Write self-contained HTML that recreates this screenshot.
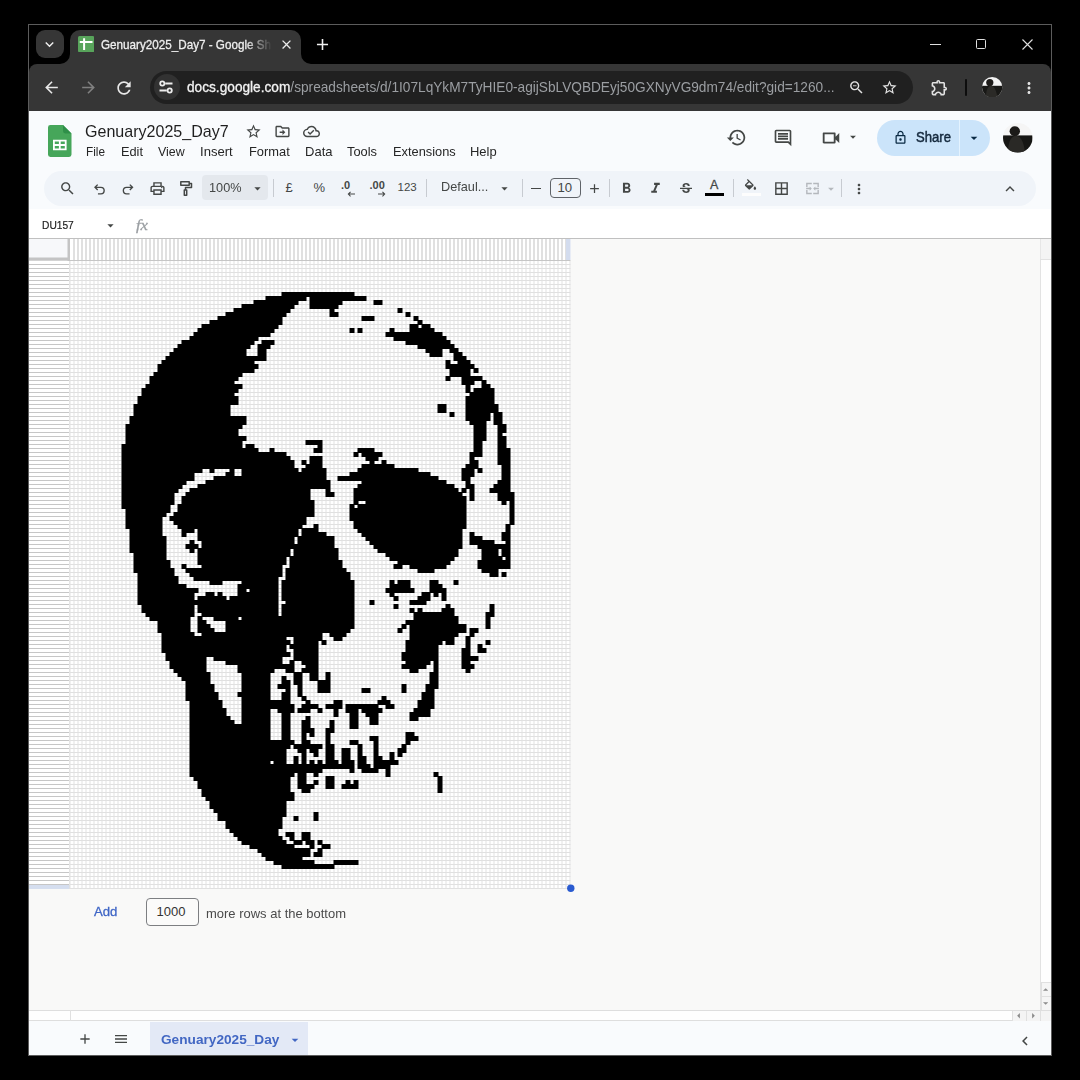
<!DOCTYPE html>
<html><head><meta charset="utf-8"><title>Genuary2025_Day7 - Google Sheets</title>
<style>
html,body{margin:0;padding:0;background:#000;}
body{width:1080px;height:1080px;position:relative;overflow:hidden;font-family:"Liberation Sans",sans-serif;}
.a{position:absolute;box-sizing:border-box}
.t{position:absolute;white-space:nowrap;font-family:"Liberation Sans",sans-serif}
.ic{position:absolute;display:block}
</style></head><body>

<div class="a" style="left:28px;top:24px;width:1024px;height:1032px;background:#000;border:1px solid #5c5c5c"></div>
<div class="a" style="left:35.5px;top:30px;width:28px;height:28px;border-radius:9px;background:#363636"></div>
<svg class="ic" style="left:41.1px;top:35.5px;width:17px;height:17px" viewBox="0 0 24 24"><path fill="#f0f0f0" d="M16.59 8.59L12 13.17 7.41 8.59 6 10l6 6 6-6z"/></svg>
<div class="a" style="left:70px;top:30px;width:231px;height:36px;border-radius:10px 10px 0 0;background:#363636"></div>
<svg class="ic" style="left:60px;top:54px;width:10px;height:10px" viewBox="0 0 10 10"><path fill="#363636" d="M10 0v10H0A10 10 0 0 0 10 0z"/></svg>
<svg class="ic" style="left:301px;top:54px;width:10px;height:10px" viewBox="0 0 10 10"><path fill="#363636" d="M0 0v10h10A10 10 0 0 1 0 0z"/></svg>
<svg class="ic" style="left:77.5px;top:35.8px;width:16.3px;height:16.3px" viewBox="0 0 16.3 16.3"><rect width="16.3" height="16.3" rx="1.6" fill="#58a45b"/><path d="M6.1 2.3v11.800M1.800 6.100h12.700" stroke="#fff" stroke-width="2" fill="none"/></svg>
<div class="t" style="left:101px;top:36.86px;font-size:12.9px;line-height:15.48px;color:#efefef;transform:scaleX(0.9054);transform-origin:0 50%;-webkit-text-stroke:0.3px #efefef;width:190px;overflow:hidden;-webkit-mask-image:linear-gradient(90deg,#000 160px,transparent 189px);mask-image:linear-gradient(90deg,#000 160px,transparent 189px)">Genuary2025_Day7 - Google Sh</div>
<svg class="ic" style="left:278.5px;top:37px;width:15px;height:15px" viewBox="0 0 24 24"><path fill="#ececec" d="M19 6.41L17.59 5 12 10.59 6.41 5 5 6.41 10.59 12 5 17.59 6.41 19 12 13.41 17.59 19 19 17.59 13.41 12z"/></svg>
<svg class="ic" style="left:312.5px;top:35px;width:19px;height:19px" viewBox="0 0 24 24"><path fill="#f0f0f0" d="M19 13h-6v6h-2v-6H5v-2h6V5h2v6h6v2z"/></svg>
<div class="a" style="left:930px;top:44px;width:11px;height:1px;background:#e0e0e0"></div>
<div class="a" style="left:976px;top:39px;width:10px;height:10px;border:1.2px solid #e0e0e0;border-radius:1.5px"></div>
<svg class="ic" style="left:1022px;top:39px;width:11px;height:11px" viewBox="0 0 11 11"><path d="M0.5 0.5l10 10M10.5 0.5l-10 10" stroke="#e0e0e0" stroke-width="1.1"/></svg>
<div class="a" style="left:29px;top:64px;width:1022px;height:47px;background:#363636;border-radius:8px 8px 0 0"></div>
<svg class="ic" style="left:42px;top:78px;width:19px;height:19px" viewBox="0 0 24 24"><path fill="#e8e8e8" d="M20 11H7.83l5.59-5.59L12 4l-8 8 8 8 1.41-1.41L7.83 13H20v-2z"/></svg>
<svg class="ic" style="left:78.5px;top:78px;width:19px;height:19px" viewBox="0 0 24 24"><path fill="#808080" d="M12 4l-1.41 1.41L16.17 11H4v2h12.17l-5.58 5.59L12 20l8-8z"/></svg>
<svg class="ic" style="left:114px;top:77.5px;width:20px;height:20px" viewBox="0 0 24 24"><path fill="#e8e8e8" d="M17.65 6.35C16.2 4.9 14.21 4 12 4c-4.42 0-7.99 3.58-7.99 8s3.57 8 7.99 8c3.73 0 6.84-2.55 7.73-6h-2.08c-.82 2.33-3.04 4-5.65 4-3.31 0-6-2.69-6-6s2.69-6 6-6c1.66 0 3.14.69 4.22 1.78L13 11h7V4l-2.35 2.35z"/></svg>
<div class="a" style="left:150px;top:70.5px;width:763px;height:33.5px;border-radius:17px;background:#202020"></div>
<div class="a" style="left:153.5px;top:74px;width:26px;height:26px;border-radius:13px;background:#323232"></div>
<svg class="ic" style="left:158px;top:79px;width:16px;height:16px" viewBox="0 0 16 16"><g stroke="#ececec" stroke-width="1.800" fill="none"><path d="M7.2 4.5h7.3M1.5 11.5h7.3"/><circle cx="4.3" cy="4.5" r="2.1"/><circle cx="11.7" cy="11.5" r="2.1"/></g></svg>
<div class="t" style="left:186.5px;top:78.98px;font-size:14.2px;line-height:17.04px;color:#9b9ea2;transform:scaleX(0.9635);transform-origin:0 50%;"><span style="color:#f2f2f2;-webkit-text-stroke:0.3px #f2f2f2">docs.google.com</span>/spreadsheets/d/1I07LqYkM7TyHIE0-agijSbLVQBDEyj50GXNyVG9dm74/edit?gid=1260...</div>
<svg class="ic" style="left:847.5px;top:79px;width:17px;height:17px" viewBox="0 0 24 24"><path fill="#e3e3e3" d="M15.5 14h-.79l-.28-.27C15.41 12.59 16 11.11 16 9.5 16 5.91 13.09 3 9.5 3S3 5.91 3 9.5 5.91 16 9.5 16c1.61 0 3.09-.59 4.23-1.57l.27.28v.79l5 4.99L20.49 19l-4.99-5zm-6 0C7.01 14 5 11.99 5 9.5S7.01 5 9.5 5 14 7.01 14 9.5 11.99 14 9.5 14z"/><path d="M7 9h5v1.2H7z" fill="#e3e3e3"/></svg>
<svg class="ic" style="left:880.5px;top:78.5px;width:17px;height:17px" viewBox="0 0 24 24"><path fill="#e3e3e3" d="M22 9.24l-7.19-.62L12 2 9.19 8.63 2 9.24l5.46 4.73L5.82 21 12 17.27 18.18 21l-1.63-7.03L22 9.24zM12 15.4l-3.76 2.27 1-4.28-3.32-2.88 4.38-.38L12 6.1l1.71 4.04 4.38.38-3.32 2.88 1 4.28L12 15.4z"/></svg>
<svg class="ic" style="left:930px;top:78px;width:19px;height:19px" viewBox="0 0 24 24"><path fill="#e3e3e3" d="M10.5 4.5c.28 0 .5.22.5.5v2h6v6h2c.28 0 .5.22.5.5s-.22.5-.5.5h-2v6h-2.12c-.68-1.75-2.39-3-4.38-3s-3.7 1.25-4.38 3H4v-2.12c1.75-.68 3-2.39 3-4.38 0-1.99-1.24-3.7-2.99-4.38L4 7h6V5c0-.28.22-.5.5-.5m0-2C9.12 2.5 8 3.62 8 5H4c-1.1 0-1.99.9-1.99 2v3.8h.29c1.49 0 2.7 1.21 2.7 2.7s-1.21 2.7-2.7 2.7H2V20c0 1.1.9 2 2 2h3.8v-.3c0-1.49 1.21-2.7 2.7-2.7s2.7 1.21 2.7 2.7v.3H17c1.1 0 2-.9 2-2v-4c1.38 0 2.5-1.12 2.5-2.5S20.38 11 19 11V7c0-1.1-.9-2-2-2h-4c0-1.38-1.12-2.5-2.5-2.5z"/></svg>
<div class="a" style="left:964.5px;top:79px;width:2px;height:17px;background:#0d0d0d;border-radius:1px"></div>
<svg class="ic" style="left:982.2px;top:76.7px;width:20.4px;height:20.4px" viewBox="0 0 20.4 20.4"><defs><clipPath id="c1"><circle cx="10.2" cy="10.2" r="10.2"/></clipPath></defs><g clip-path="url(#c1)"><rect width="20.4" height="20.4" fill="#f3f3f3"/><rect y="8.8" width="20.4" height="12" fill="#181816"/><ellipse cx="7.8" cy="5.6" rx="3.6" ry="3.6" fill="#1d1b19"/><path d="M4 20.4c0-7 1.500-10.500 4-11.500s6 1.500 7.500 11.500z" fill="#2b2a27"/></g></svg>
<svg class="ic" style="left:1020px;top:78.5px;width:18px;height:18px" viewBox="0 0 24 24"><path fill="#e3e3e3" d="M12 8c1.1 0 2-.9 2-2s-.9-2-2-2-2 .9-2 2 .9 2 2 2zm0 2c-1.1 0-2 .9-2 2s.9 2 2 2 2-.9 2-2-.9-2-2-2zm0 6c-1.1 0-2 .9-2 2s.9 2 2 2 2-.9 2-2-.9-2-2-2z"/></svg>
<div class="a" style="left:29px;top:111px;width:1022px;height:943px;background:#f9fbfd"></div>
<svg class="ic" style="left:48px;top:124.5px;width:23.5px;height:32px" viewBox="0 0 23.5 32"><path d="M2.4 0h12.6l8.5 8.5v21.1a2.4 2.4 0 0 1-2.4 2.4H2.4A2.4 2.4 0 0 1 0 29.600V2.4A2.400 2.400 0 0 1 2.4 0z" fill="#46a65a"/><path d="M15 0l8.500 8.500H17.400A2.400 2.400 0 0 1 15 6.100z" fill="#2f8f49"/><path d="M5 14.800h13.600v10.500H5zM6.800 16.600v2.500h4.100v-2.500zm5.900 0v2.500h4.100v-2.500zM6.800 20.900v2.600h4.100v-2.600zm5.900 0v2.600h4.100v-2.600z" fill="#fff" fill-rule="evenodd"/></svg>
<div class="t" style="left:84.6px;top:122.18px;font-size:16.2px;line-height:19.44px;color:#1f1f1f;transform:scaleX(0.9918);transform-origin:0 50%;">Genuary2025_Day7</div>
<svg class="ic" style="left:245px;top:122.5px;width:17px;height:17px" viewBox="0 0 24 24"><path fill="#444746" d="M22 9.24l-7.19-.62L12 2 9.19 8.63 2 9.24l5.46 4.73L5.82 21 12 17.27 18.18 21l-1.63-7.03L22 9.24zM12 15.4l-3.76 2.27 1-4.28-3.32-2.88 4.38-.38L12 6.1l1.71 4.04 4.38.38-3.32 2.88 1 4.28L12 15.4z"/></svg>
<svg class="ic" style="left:274px;top:122.5px;width:17px;height:17px" viewBox="0 0 24 24"><path fill="#444746" d="M20 6h-8l-2-2H4c-1.1 0-2 .9-2 2v12c0 1.1.9 2 2 2h16c1.1 0 2-.9 2-2V8c0-1.1-.9-2-2-2zm0 12H4V6h5.17l2 2H20v10zm-8-1l4-4-4-4v3H8v2h4v3z"/></svg>
<svg class="ic" style="left:302.5px;top:122.5px;width:17px;height:17px" viewBox="0 0 24 24"><path fill="#444746" d="M19.35 10.04C18.67 6.59 15.64 4 12 4 9.11 4 6.6 5.64 5.35 8.04 2.34 8.36 0 10.91 0 14c0 3.31 2.69 6 6 6h13c2.76 0 5-2.24 5-5 0-2.64-2.05-4.78-4.65-4.96zM19 18H6c-2.21 0-4-1.79-4-4s1.79-4 4-4h.71C7.37 7.69 9.48 6 12 6c3.04 0 5.5 2.46 5.5 5.5v.5H19c1.66 0 3 1.34 3 3s-1.34 3-3 3zm-9-3.82l-2.09-2.09L6.5 13.5 10 17l6.01-6.01-1.41-1.41z"/></svg>
<div class="t" style="left:86px;top:144.16px;font-size:12.9px;line-height:15.48px;color:#262626;transform:scaleX(0.9143);transform-origin:0 50%;">File</div>
<div class="t" style="left:120.7px;top:144.16px;font-size:12.9px;line-height:15.48px;color:#262626;transform:scaleX(0.9902);transform-origin:0 50%;">Edit</div>
<div class="t" style="left:158px;top:144.16px;font-size:12.9px;line-height:15.48px;color:#262626;transform:scaleX(0.9596);transform-origin:0 50%;">View</div>
<div class="t" style="left:200.2px;top:144.16px;font-size:12.9px;line-height:15.48px;color:#262626;transform:scaleX(1.0140);transform-origin:0 50%;">Insert</div>
<div class="t" style="left:248.8px;top:144.16px;font-size:12.9px;line-height:15.48px;color:#262626;transform:scaleX(0.9969);transform-origin:0 50%;">Format</div>
<div class="t" style="left:304.8px;top:144.16px;font-size:12.9px;line-height:15.48px;color:#262626;transform:scaleX(1.0098);transform-origin:0 50%;">Data</div>
<div class="t" style="left:347.4px;top:144.16px;font-size:12.9px;line-height:15.48px;color:#262626;transform:scaleX(0.9969);transform-origin:0 50%;">Tools</div>
<div class="t" style="left:392.7px;top:144.16px;font-size:12.9px;line-height:15.48px;color:#262626;transform:scaleX(0.9943);transform-origin:0 50%;">Extensions</div>
<div class="t" style="left:470px;top:144.16px;font-size:12.9px;line-height:15.48px;color:#262626;transform:scaleX(1.0070);transform-origin:0 50%;">Help</div>
<svg class="ic" style="left:726px;top:127px;width:21px;height:21px" viewBox="0 0 24 24"><path fill="#444746" d="M13 3c-4.97 0-9 4.03-9 9H1l3.89 3.89.07.14L9 12H6c0-3.87 3.13-7 7-7s7 3.13 7 7-3.13 7-7 7c-1.93 0-3.68-.79-4.94-2.06l-1.42 1.42C8.27 19.99 10.51 21 13 21c4.97 0 9-4.03 9-9s-4.03-9-9-9zm-1 5v5l4.28 2.54.72-1.21-3.5-2.08V8H12z"/></svg>
<svg class="ic" style="left:772.5px;top:128px;width:20px;height:20px" viewBox="0 0 24 24"><path fill="#444746" d="M21.99 4c0-1.1-.89-2-1.99-2H4c-1.1 0-2 .9-2 2v12c0 1.1.9 2 2 2h14l4 4-.01-18zM20 4v13.17L18.83 16H4V4h16zM6 12h12v2H6zm0-3h12v2H6zm0-3h12v2H6z"/></svg>
<svg class="ic" style="left:820px;top:126.5px;width:22px;height:22px" viewBox="0 0 24 24"><path fill="#444746" d="M15 8v8H5V8h10m1-2H4c-.55 0-1 .45-1 1v10c0 .55.45 1 1 1h12c.55 0 1-.45 1-1v-3.5l4 4v-11l-4 4V7c0-.55-.45-1-1-1z"/></svg>
<svg class="ic" style="left:846px;top:130px;width:14px;height:14px" viewBox="0 0 24 24"><path fill="#444746" d="M7 10l5 5 5-5z"/></svg>
<div class="a" style="left:877px;top:119.500px;width:112.500px;height:36.500px;border-radius:18.250px;background:#cbe4fa"></div>
<div class="a" style="left:958.5px;top:119.500px;width:1px;height:36.500px;background:#e4f3ff"></div>
<svg class="ic" style="left:892.5px;top:130px;width:15px;height:15px" viewBox="0 0 24 24"><path fill="#0a2a44" d="M18 8h-1V6c0-2.76-2.24-5-5-5S7 3.24 7 6v2H6c-1.1 0-2 .9-2 2v10c0 1.1.9 2 2 2h12c1.1 0 2-.9 2-2V10c0-1.1-.9-2-2-2zM9 6c0-1.66 1.34-3 3-3s3 1.34 3 3v2H9V6zm9 14H6V10h12v10zm-6-3c1.1 0 2-.9 2-2s-.9-2-2-2-2 .9-2 2 .9 2 2 2z"/></svg>
<div class="t" style="left:916px;top:129.72px;font-size:13.8px;line-height:16.56px;color:#14283c;transform:scaleX(0.9504);transform-origin:0 50%;-webkit-text-stroke:0.45px #14283c;">Share</div>
<svg class="ic" style="left:966px;top:130px;width:16px;height:16px" viewBox="0 0 24 24"><path fill="#0a2a44" d="M7 10l5 5 5-5z"/></svg>
<svg class="ic" style="left:1003.3px;top:123.3px;width:29.6px;height:29.6px" viewBox="0 0 29.6 29.6"><defs><clipPath id="c2"><circle cx="14.8" cy="14.8" r="14.8"/></clipPath></defs><g clip-path="url(#c2)"><rect width="29.6" height="29.6" fill="#f5f5f5"/><rect y="12.400" width="29.6" height="18" fill="#161614"/><ellipse cx="11.8" cy="8.200" rx="5.200" ry="5" fill="#1b1a18"/><path d="M5 29.6c0-10 2.500-15 6.500-16.500s9 2.500 10.500 16.500z" fill="#2a2926"/></g></svg>
<div class="a" style="left:44px;top:170.5px;width:992px;height:35.3px;border-radius:17.600px;background:#f0f4f9"></div>
<svg class="ic" style="left:59px;top:179.5px;width:17px;height:17px" viewBox="0 0 24 24"><path fill="#444746" d="M15.5 14h-.79l-.28-.27C15.41 12.59 16 11.11 16 9.5 16 5.91 13.09 3 9.5 3S3 5.91 3 9.5 5.91 16 9.5 16c1.61 0 3.09-.59 4.23-1.57l.27.28v.79l5 4.99L20.49 19l-4.99-5zm-6 0C7.01 14 5 11.99 5 9.5S7.01 5 9.5 5 14 7.01 14 9.5 11.99 14 9.5 14z"/></svg>
<svg class="ic" style="left:92.5px;top:182.5px;width:13.5px;height:13.5px" viewBox="0 0 15 15"><path d="M5.2 1.800L2.200 4.800l3 3M2.500 4.800h6.300a3.600 3.600 0 0 1 0 7.200H5.500" stroke="#444746" stroke-width="1.500" fill="none"/></svg>
<svg class="ic" style="left:120.5px;top:182.5px;width:13.5px;height:13.5px" viewBox="0 0 15 15"><path d="M9.800 1.800l3 3-3 3M12.500 4.800H6.200a3.600 3.600 0 0 0 0 7.200h3.300" stroke="#444746" stroke-width="1.500" fill="none"/></svg>
<svg class="ic" style="left:148.5px;top:179.5px;width:17px;height:17px" viewBox="0 0 24 24"><path fill="#444746" d="M19 8h-1V3H6v5H5c-1.66 0-3 1.34-3 3v6h4v4h12v-4h4v-6c0-1.66-1.34-3-3-3zM8 5h8v3H8V5zm8 12v2H8v-4h8v2zm2-2v-2H6v2H4v-4c0-.55.45-1 1-1h14c.55 0 1 .45 1 1v4h-2zM18 11.5a1 1 0 1 1 0-2 1 1 0 0 1 0 2z"/></svg>
<svg class="ic" style="left:177.5px;top:180px;width:16px;height:17px" viewBox="0 0 16 17"><path d="M2.800 1.800h8.400v3.400H2.800zM11.200 3.500h2.300v4H7.500v2.500M6.300 10h2.400v5.200H6.300z" stroke="#444746" stroke-width="1.500" fill="none" stroke-linejoin="round"/></svg>
<div class="a" style="left:202px;top:175px;width:66px;height:25px;border-radius:4px;background:#e4e8ed"></div>
<div class="t" style="left:209px;top:180.08px;font-size:13.2px;line-height:15.84px;color:#444746;transform:scaleX(0.9634);transform-origin:0 50%;">100%</div>
<svg class="ic" style="left:249.5px;top:181px;width:15px;height:15px" viewBox="0 0 24 24"><path fill="#444746" d="M7 10l5 5 5-5z"/></svg>
<div class="a" style="left:273px;top:179px;width:1px;height:18px;background:#c7cbd1"></div>
<div class="t" style="left:285.5px;top:179.7px;font-size:13px;line-height:15.6px;color:#444746;">£</div>
<div class="t" style="left:313.5px;top:180.2px;font-size:13px;line-height:15.6px;color:#444746;">%</div>
<div class="t" style="left:341px;top:178.9px;font-size:11px;line-height:13.2px;color:#444746;font-weight:bold">.0</div>
<svg class="ic" style="left:346.5px;top:190.5px;width:8px;height:6.200px" viewBox="0 0 9 7"><path d="M9 3.500H1.500M4 1L1.500 3.500 4 6" stroke="#444746" stroke-width="1.200" fill="none"/></svg>
<div class="t" style="left:369.5px;top:178.9px;font-size:11px;line-height:13.2px;color:#444746;font-weight:bold">.00</div>
<svg class="ic" style="left:377.5px;top:190.5px;width:8px;height:6.200px" viewBox="0 0 9 7"><path d="M0 3.500h7.500M5 1l2.500 2.500L5 6" stroke="#444746" stroke-width="1.200" fill="none"/></svg>
<div class="t" style="left:397.5px;top:181.1px;font-size:11.5px;line-height:13.8px;color:#444746;">123</div>
<div class="a" style="left:425.5px;top:179px;width:1px;height:18px;background:#c7cbd1"></div>
<div class="t" style="left:440.7px;top:179.34px;font-size:13.6px;line-height:16.32px;color:#444746;transform:scaleX(0.9343);transform-origin:0 50%;">Defaul...</div>
<svg class="ic" style="left:496.5px;top:181px;width:15px;height:15px" viewBox="0 0 24 24"><path fill="#444746" d="M7 10l5 5 5-5z"/></svg>
<div class="a" style="left:522px;top:179px;width:1px;height:18px;background:#c7cbd1"></div>
<div class="a" style="left:530.5px;top:187.500px;width:10.500px;height:1.500px;background:#444746"></div>
<div class="a" style="left:549.500px;top:177.500px;width:31.500px;height:20.500px;border:1px solid #5f6368;border-radius:4px"></div>
<div class="t" style="left:557.5px;top:180.08px;font-size:13.2px;line-height:15.84px;color:#444746;">10</div>
<svg class="ic" style="left:586.5px;top:180.5px;width:15px;height:15px" viewBox="0 0 24 24"><path fill="#444746" d="M19 13h-6v6h-2v-6H5v-2h6V5h2v6h6v2z"/></svg>
<div class="a" style="left:609px;top:179px;width:1px;height:18px;background:#c7cbd1"></div>
<svg class="ic" style="left:617.5px;top:180px;width:17px;height:17px" viewBox="0 0 24 24"><path fill="#444746" d="M15.6 10.79c.97-.67 1.65-1.77 1.65-2.79 0-2.26-1.75-4-4-4H7v14h7.04c2.09 0 3.71-1.7 3.71-3.79 0-1.52-.86-2.82-2.15-3.42zM10 6.5h3c.83 0 1.5.67 1.5 1.5s-.67 1.5-1.5 1.5h-3v-3zm3.5 9H10v-3h3.5c.83 0 1.5.67 1.5 1.5s-.67 1.5-1.5 1.5z"/></svg>
<svg class="ic" style="left:647px;top:180px;width:17px;height:17px" viewBox="0 0 24 24"><path fill="#444746" d="M10 4v3h2.21l-3.42 8H6v3h8v-3h-2.21l3.42-8H18V4z"/></svg>
<svg class="ic" style="left:677.5px;top:180.5px;width:16px;height:16px" viewBox="0 0 24 24"><path fill="#444746" d="M6.85 7.08C6.85 4.37 9.45 3 12.24 3c1.64 0 3 .49 3.9 1.28.77.65 1.46 1.73 1.46 3.24h-3.01c0-.31-.05-.59-.15-.85-.29-.86-1.2-1.28-2.25-1.28-1.86 0-2.34 1.02-2.34 1.7 0 .48.25.88.74 1.21.38.25.77.48 1.41.7H7.39c-.21-.34-.54-.89-.54-1.92zM21 12v-2H3v2h9.62c1.15.45 1.96.75 1.96 1.97 0 1-.81 1.67-2.28 1.67-1.54 0-2.93-.54-2.93-2.51H6.4c0 .55.08 1.13.24 1.58.81 2.29 3.29 3.3 5.67 3.3 2.27 0 5.3-.89 5.3-4.05 0-.3-.01-1.16-.48-1.94H21V12z"/></svg>
<div class="t" style="left:710px;top:177.5px;font-size:12.5px;line-height:15px;color:#444746;-webkit-text-stroke:0.3px #444746;">A</div>
<div class="a" style="left:704.500px;top:193.4px;width:19px;height:2.6px;background:#000"></div>
<div class="a" style="left:733px;top:179px;width:1px;height:18px;background:#c7cbd1"></div>
<svg class="ic" style="left:742.5px;top:178.5px;width:15px;height:15px" viewBox="0 0 24 24"><path fill="#444746" d="M16.56 8.94L7.62 0 6.21 1.41l2.38 2.38-5.15 5.15c-.59.59-.59 1.54 0 2.12l5.5 5.5c.29.29.68.44 1.06.44s.77-.15 1.06-.44l5.5-5.5c.59-.58.59-1.53 0-2.12zM5.21 10L10 5.21 14.79 10H5.21zM19 11.5s-2 2.17-2 3.5c0 1.1.9 2 2 2s2-.9 2-2c0-1.33-2-3.5-2-3.5z"/></svg>
<div class="a" style="left:741.5px;top:193.4px;width:19px;height:2.6px;background:#fdfdfd"></div>
<svg class="ic" style="left:772.5px;top:180px;width:17px;height:17px" viewBox="0 0 24 24"><path fill="#444746" d="M3 3v18h18V3H3zm8 16H5v-6h6v6zm0-8H5V5h6v6zm8 8h-6v-6h6v6zm0-8h-6V5h6v6z"/></svg>
<svg class="ic" style="left:803.5px;top:180px;width:17px;height:17px" viewBox="0 0 24 24"><path fill="#b4b8bd" d="M5 10H3V4h8v2H5v4zm14 8h-6v2h8v-6h-2v4zM5 18v-4H3v6h8v-2H5zM21 4h-8v2h6v4h2V4zM8 13v2l3-3-3-3v2H3v2h5zm8-2V9l-3 3 3 3v-2h5v-2h-5z"/></svg>
<svg class="ic" style="left:823.5px;top:181.5px;width:14px;height:14px" viewBox="0 0 24 24"><path fill="#b4b8bd" d="M7 10l5 5 5-5z"/></svg>
<div class="a" style="left:841px;top:179px;width:1px;height:18px;background:#c7cbd1"></div>
<svg class="ic" style="left:851px;top:180.5px;width:16px;height:16px" viewBox="0 0 24 24"><path fill="#444746" d="M12 8c1.1 0 2-.9 2-2s-.9-2-2-2-2 .9-2 2 .9 2 2 2zm0 2c-1.1 0-2 .9-2 2s.9 2 2 2 2-.9 2-2-.9-2-2-2zm0 6c-1.1 0-2 .9-2 2s.9 2 2 2 2-.9 2-2-.9-2-2-2z"/></svg>
<svg class="ic" style="left:1001px;top:179.5px;width:18px;height:18px" viewBox="0 0 24 24"><path fill="#444746" d="M12 8l-6 6 1.41 1.41L12 10.83l4.59 4.58L18 14z"/></svg>
<div class="a" style="left:29px;top:209px;width:1022px;height:30px;background:#fff"></div>
<div class="t" style="left:42.2px;top:218.22px;font-size:11.8px;line-height:14.16px;color:#222;transform:scaleX(0.8657);transform-origin:0 50%;-webkit-text-stroke:0.2px #222;">DU157</div>
<svg class="ic" style="left:102.5px;top:218px;width:15px;height:15px" viewBox="0 0 24 24"><path fill="#444746" d="M7 10l5 5 5-5z"/></svg>
<div class="t" style="left:136.3px;top:216px;font-size:15.5px;line-height:18.6px;color:#9b9fa3;transform:scaleX(1.0726);transform-origin:0 50%;font-family:'Liberation Serif',serif;-webkit-text-stroke:0.3px #9b9fa3;"><i>fx</i></div>
<div class="a" style="left:29px;top:238px;width:1022px;height:773px;background:#f9f9f8;border-top:1px solid #c0c0c0"></div>
<svg class="ic" style="left:0;top:0;width:1080px;height:1080px" viewBox="0 0 1080 1080">
<rect x="70" y="239" width="500.500" height="21" fill="#fff"/>
<path d="M74 239v21M78 239v21M82 239v21M86 239v21M90 239v21M94 239v21M98 239v21M102 239v21M106 239v21M110 239v21M114 239v21M118 239v21M122 239v21M126 239v21M130 239v21M134 239v21M138 239v21M142 239v21M146 239v21M150 239v21M154 239v21M158 239v21M162 239v21M166 239v21M170 239v21M174 239v21M178 239v21M182 239v21M186 239v21M190 239v21M194 239v21M198 239v21M202 239v21M206 239v21M210 239v21M214 239v21M218 239v21M222 239v21M226 239v21M230 239v21M234 239v21M238 239v21M242 239v21M246 239v21M250 239v21M254 239v21M258 239v21M262 239v21M266 239v21M270 239v21M274 239v21M278 239v21M282 239v21M286 239v21M290 239v21M294 239v21M298 239v21M302 239v21M306 239v21M310 239v21M314 239v21M318 239v21M322 239v21M326 239v21M330 239v21M334 239v21M338 239v21M342 239v21M346 239v21M350 239v21M354 239v21M358 239v21M362 239v21M366 239v21M370 239v21M374 239v21M378 239v21M382 239v21M386 239v21M390 239v21M394 239v21M398 239v21M402 239v21M406 239v21M410 239v21M414 239v21M418 239v21M422 239v21M426 239v21M430 239v21M434 239v21M438 239v21M442 239v21M446 239v21M450 239v21M454 239v21M458 239v21M462 239v21M466 239v21M470 239v21M474 239v21M478 239v21M482 239v21M486 239v21M490 239v21M494 239v21M498 239v21M502 239v21M506 239v21M510 239v21M514 239v21M518 239v21M522 239v21M526 239v21M530 239v21M534 239v21M538 239v21M542 239v21M546 239v21M550 239v21M554 239v21M558 239v21M562 239v21M566 239v21" stroke="#dfdfdf" stroke-width="1.900" fill="none"/>
<rect x="566" y="239" width="4.500" height="21" fill="#d3dcee"/>
<rect x="29" y="239" width="39" height="19" fill="#f7f8fa"/>
<rect x="67.500" y="239" width="2.500" height="22" fill="#c4c4c4"/>
<rect x="29" y="257.5" width="41" height="3.200" fill="#c4c4c4"/>
<rect x="70" y="260" width="500.500" height="1" fill="#c6c6c6"/>
<rect x="29" y="261" width="41" height="628" fill="#fff"/>
<path d="M29 264.5h40M29 268.5h40M29 272.5h40M29 276.5h40M29 280.5h40M29 284.5h40M29 288.5h40M29 292.5h40M29 296.5h40M29 300.5h40M29 304.5h40M29 308.5h40M29 312.5h40M29 316.5h40M29 320.5h40M29 324.5h40M29 328.5h40M29 332.5h40M29 336.5h40M29 340.5h40M29 344.5h40M29 348.5h40M29 352.5h40M29 356.5h40M29 360.5h40M29 364.5h40M29 368.5h40M29 372.5h40M29 376.5h40M29 380.5h40M29 384.5h40M29 388.5h40M29 392.5h40M29 396.5h40M29 400.5h40M29 404.5h40M29 408.5h40M29 412.5h40M29 416.5h40M29 420.5h40M29 424.5h40M29 428.5h40M29 432.5h40M29 436.5h40M29 440.5h40M29 444.5h40M29 448.5h40M29 452.5h40M29 456.5h40M29 460.5h40M29 464.5h40M29 468.5h40M29 472.5h40M29 476.5h40M29 480.5h40M29 484.5h40M29 488.5h40M29 492.5h40M29 496.5h40M29 500.5h40M29 504.5h40M29 508.5h40M29 512.5h40M29 516.5h40M29 520.5h40M29 524.5h40M29 528.5h40M29 532.5h40M29 536.5h40M29 540.5h40M29 544.5h40M29 548.5h40M29 552.5h40M29 556.5h40M29 560.5h40M29 564.5h40M29 568.5h40M29 572.5h40M29 576.5h40M29 580.5h40M29 584.5h40M29 588.5h40M29 592.5h40M29 596.5h40M29 600.5h40M29 604.5h40M29 608.5h40M29 612.5h40M29 616.5h40M29 620.5h40M29 624.5h40M29 628.5h40M29 632.5h40M29 636.5h40M29 640.5h40M29 644.5h40M29 648.5h40M29 652.5h40M29 656.5h40M29 660.5h40M29 664.5h40M29 668.5h40M29 672.5h40M29 676.5h40M29 680.5h40M29 684.5h40M29 688.5h40M29 692.5h40M29 696.5h40M29 700.5h40M29 704.5h40M29 708.5h40M29 712.5h40M29 716.5h40M29 720.5h40M29 724.5h40M29 728.5h40M29 732.5h40M29 736.5h40M29 740.5h40M29 744.5h40M29 748.5h40M29 752.5h40M29 756.5h40M29 760.5h40M29 764.5h40M29 768.5h40M29 772.5h40M29 776.5h40M29 780.5h40M29 784.5h40M29 788.5h40M29 792.5h40M29 796.5h40M29 800.5h40M29 804.5h40M29 808.5h40M29 812.5h40M29 816.5h40M29 820.5h40M29 824.5h40M29 828.5h40M29 832.5h40M29 836.5h40M29 840.5h40M29 844.5h40M29 848.5h40M29 852.5h40M29 856.5h40M29 860.5h40M29 864.5h40M29 868.5h40M29 872.5h40M29 876.5h40M29 880.5h40M29 884.5h40M29 888.5h40" stroke="#c6c6c6" stroke-width="1" fill="none"/>
<rect x="29" y="885" width="40.500" height="4" fill="#d5deef"/>
<rect x="69.500" y="261" width="1" height="628" fill="#d0d0d0"/>
<rect x="70" y="261" width="500.500" height="628" fill="#fff"/>
<path d="M70 264.5h500.5M70 268.5h500.5M70 272.5h500.5M70 276.5h500.5M70 280.5h500.5M70 284.5h500.5M70 288.5h500.5M70 292.5h500.5M70 296.5h500.5M70 300.5h500.5M70 304.5h500.5M70 308.5h500.5M70 312.5h500.5M70 316.5h500.5M70 320.5h500.5M70 324.5h500.5M70 328.5h500.5M70 332.5h500.5M70 336.5h500.5M70 340.5h500.5M70 344.5h500.5M70 348.5h500.5M70 352.5h500.5M70 356.5h500.5M70 360.5h500.5M70 364.5h500.5M70 368.5h500.5M70 372.5h500.5M70 376.5h500.5M70 380.5h500.5M70 384.5h500.5M70 388.5h500.5M70 392.5h500.5M70 396.5h500.5M70 400.5h500.5M70 404.5h500.5M70 408.5h500.5M70 412.5h500.5M70 416.5h500.5M70 420.5h500.5M70 424.5h500.5M70 428.5h500.5M70 432.5h500.5M70 436.5h500.5M70 440.5h500.5M70 444.5h500.5M70 448.5h500.5M70 452.5h500.5M70 456.5h500.5M70 460.5h500.5M70 464.5h500.5M70 468.5h500.5M70 472.5h500.5M70 476.5h500.5M70 480.5h500.5M70 484.5h500.5M70 488.5h500.5M70 492.5h500.5M70 496.5h500.5M70 500.5h500.5M70 504.5h500.5M70 508.5h500.5M70 512.5h500.5M70 516.5h500.5M70 520.5h500.5M70 524.5h500.5M70 528.5h500.5M70 532.5h500.5M70 536.5h500.5M70 540.5h500.5M70 544.5h500.5M70 548.5h500.5M70 552.5h500.5M70 556.5h500.5M70 560.5h500.5M70 564.5h500.5M70 568.5h500.5M70 572.5h500.5M70 576.5h500.5M70 580.5h500.5M70 584.5h500.5M70 588.5h500.5M70 592.5h500.5M70 596.5h500.5M70 600.5h500.5M70 604.5h500.5M70 608.5h500.5M70 612.5h500.5M70 616.5h500.5M70 620.5h500.5M70 624.5h500.5M70 628.5h500.5M70 632.5h500.5M70 636.5h500.5M70 640.5h500.5M70 644.5h500.5M70 648.5h500.5M70 652.5h500.5M70 656.5h500.5M70 660.5h500.5M70 664.5h500.5M70 668.5h500.5M70 672.5h500.5M70 676.5h500.5M70 680.5h500.5M70 684.5h500.5M70 688.5h500.5M70 692.5h500.5M70 696.5h500.5M70 700.5h500.5M70 704.5h500.5M70 708.5h500.5M70 712.5h500.5M70 716.5h500.5M70 720.5h500.5M70 724.5h500.5M70 728.5h500.5M70 732.5h500.5M70 736.5h500.5M70 740.5h500.5M70 744.5h500.5M70 748.5h500.5M70 752.5h500.5M70 756.5h500.5M70 760.5h500.5M70 764.5h500.5M70 768.5h500.5M70 772.5h500.5M70 776.5h500.5M70 780.5h500.5M70 784.5h500.5M70 788.5h500.5M70 792.5h500.5M70 796.5h500.5M70 800.5h500.5M70 804.5h500.5M70 808.5h500.5M70 812.5h500.5M70 816.5h500.5M70 820.5h500.5M70 824.5h500.5M70 828.5h500.5M70 832.5h500.5M70 836.5h500.5M70 840.5h500.5M70 844.5h500.5M70 848.5h500.5M70 852.5h500.5M70 856.5h500.5M70 860.5h500.5M70 864.5h500.5M70 868.5h500.5M70 872.5h500.5M70 876.5h500.5M70 880.5h500.5M70 884.5h500.5M70 888.5h500.5" stroke="#e0e0e0" stroke-width="1" fill="none"/>
<path d="M70 261v628M74 261v628M78 261v628M82 261v628M86 261v628M90 261v628M94 261v628M98 261v628M102 261v628M106 261v628M110 261v628M114 261v628M118 261v628M122 261v628M126 261v628M130 261v628M134 261v628M138 261v628M142 261v628M146 261v628M150 261v628M154 261v628M158 261v628M162 261v628M166 261v628M170 261v628M174 261v628M178 261v628M182 261v628M186 261v628M190 261v628M194 261v628M198 261v628M202 261v628M206 261v628M210 261v628M214 261v628M218 261v628M222 261v628M226 261v628M230 261v628M234 261v628M238 261v628M242 261v628M246 261v628M250 261v628M254 261v628M258 261v628M262 261v628M266 261v628M270 261v628M274 261v628M278 261v628M282 261v628M286 261v628M290 261v628M294 261v628M298 261v628M302 261v628M306 261v628M310 261v628M314 261v628M318 261v628M322 261v628M326 261v628M330 261v628M334 261v628M338 261v628M342 261v628M346 261v628M350 261v628M354 261v628M358 261v628M362 261v628M366 261v628M370 261v628M374 261v628M378 261v628M382 261v628M386 261v628M390 261v628M394 261v628M398 261v628M402 261v628M406 261v628M410 261v628M414 261v628M418 261v628M422 261v628M426 261v628M430 261v628M434 261v628M438 261v628M442 261v628M446 261v628M450 261v628M454 261v628M458 261v628M462 261v628M466 261v628M470 261v628M474 261v628M478 261v628M482 261v628M486 261v628M490 261v628M494 261v628M498 261v628M502 261v628M506 261v628M510 261v628M514 261v628M518 261v628M522 261v628M526 261v628M530 261v628M534 261v628M538 261v628M542 261v628M546 261v628M550 261v628M554 261v628M558 261v628M562 261v628M566 261v628M570 261v628" stroke="#e1e1e1" stroke-width="1" fill="none"/>
<path d="M281.5 292h73v5h-73zM265.5 296h41v5h-41zM309.5 296h57v5h-57zM253.5 300h45v5h-45zM309.5 300h33v5h-33zM373.5 300h9v5h-9zM241.5 304h53v5h-53zM309.5 304h29v5h-29zM233.5 308h57v5h-57zM329.5 308h5v5h-5zM397.5 308h5v5h-5zM225.5 312h61v5h-61zM329.5 312h9v5h-9zM405.5 312h5v5h-5zM217.5 316h65v5h-65zM361.5 316h13v5h-13zM413.5 316h5v5h-5zM209.5 320h73v5h-73zM417.5 320h5v5h-5zM201.5 324h77v5h-77zM409.5 324h9v5h-9zM421.5 324h9v5h-9zM197.5 328h77v5h-77zM349.5 328h5v5h-5zM357.5 328h5v5h-5zM389.5 328h5v5h-5zM409.5 328h25v5h-25zM193.5 332h77v5h-77zM385.5 332h57v5h-57zM189.5 336h69v5h-69zM393.5 336h53v5h-53zM181.5 340h73v5h-73zM261.5 340h13v5h-13zM405.5 340h45v5h-45zM177.5 344h73v5h-73zM257.5 344h13v5h-13zM417.5 344h37v5h-37zM173.5 348h73v5h-73zM257.5 348h9v5h-9zM425.5 348h17v5h-17zM449.5 348h9v5h-9zM169.5 352h77v5h-77zM257.5 352h9v5h-9zM429.5 352h13v5h-13zM453.5 352h9v5h-9zM165.5 356h101v5h-101zM453.5 356h13v5h-13zM161.5 360h93v5h-93zM445.5 360h5v5h-5zM457.5 360h13v5h-13zM157.5 364h101v5h-101zM445.5 364h29v5h-29zM157.5 368h97v5h-97zM449.5 368h21v5h-21zM473.5 368h5v5h-5zM153.5 372h89v5h-89zM449.5 372h21v5h-21zM149.5 376h89v5h-89zM445.5 376h5v5h-5zM461.5 376h21v5h-21zM149.5 380h85v5h-85zM461.5 380h13v5h-13zM481.5 380h5v5h-5zM145.5 384h97v5h-97zM465.5 384h5v5h-5zM481.5 384h9v5h-9zM141.5 388h97v5h-97zM465.5 388h5v5h-5zM473.5 388h21v5h-21zM141.5 392h93v5h-93zM469.5 392h25v5h-25zM137.5 396h101v5h-101zM465.5 396h29v5h-29zM137.5 400h101v5h-101zM465.5 400h29v5h-29zM133.5 404h97v5h-97zM437.5 404h9v5h-9zM465.5 404h33v5h-33zM133.5 408h97v5h-97zM437.5 408h9v5h-9zM465.5 408h33v5h-33zM133.5 412h97v5h-97zM449.5 412h5v5h-5zM465.5 412h25v5h-25zM493.5 412h9v5h-9zM129.5 416h117v5h-117zM465.5 416h25v5h-25zM493.5 416h9v5h-9zM129.5 420h117v5h-117zM469.5 420h17v5h-17zM493.5 420h9v5h-9zM125.5 424h117v5h-117zM473.5 424h13v5h-13zM497.5 424h9v5h-9zM125.5 428h113v5h-113zM473.5 428h13v5h-13zM497.5 428h9v5h-9zM125.5 432h113v5h-113zM473.5 432h13v5h-13zM497.5 432h5v5h-5zM125.5 436h121v5h-121zM473.5 436h13v5h-13zM497.5 436h9v5h-9zM125.5 440h117v5h-117zM305.5 440h17v5h-17zM473.5 440h9v5h-9zM497.5 440h9v5h-9zM121.5 444h121v5h-121zM245.5 444h9v5h-9zM317.5 444h5v5h-5zM473.5 444h9v5h-9zM497.5 444h9v5h-9zM121.5 448h137v5h-137zM269.5 448h5v5h-5zM313.5 448h9v5h-9zM357.5 448h17v5h-17zM473.5 448h9v5h-9zM497.5 448h13v5h-13zM121.5 452h165v5h-165zM353.5 452h5v5h-5zM361.5 452h21v5h-21zM469.5 452h13v5h-13zM497.5 452h13v5h-13zM121.5 456h169v5h-169zM309.5 456h13v5h-13zM365.5 456h13v5h-13zM469.5 456h5v5h-5zM497.5 456h13v5h-13zM121.5 460h173v5h-173zM301.5 460h5v5h-5zM309.5 460h13v5h-13zM369.5 460h5v5h-5zM381.5 460h5v5h-5zM469.5 460h9v5h-9zM497.5 460h13v5h-13zM121.5 464h173v5h-173zM305.5 464h17v5h-17zM361.5 464h33v5h-33zM465.5 464h13v5h-13zM501.5 464h9v5h-9zM121.5 468h81v5h-81zM209.5 468h5v5h-5zM229.5 468h5v5h-5zM241.5 468h57v5h-57zM301.5 468h25v5h-25zM357.5 468h61v5h-61zM461.5 468h13v5h-13zM477.5 468h5v5h-5zM501.5 468h9v5h-9zM121.5 472h73v5h-73zM225.5 472h9v5h-9zM241.5 472h85v5h-85zM349.5 472h81v5h-81zM461.5 472h13v5h-13zM501.5 472h9v5h-9zM121.5 476h73v5h-73zM213.5 476h113v5h-113zM337.5 476h101v5h-101zM461.5 476h9v5h-9zM501.5 476h9v5h-9zM121.5 480h65v5h-65zM205.5 480h125v5h-125zM361.5 480h85v5h-85zM465.5 480h5v5h-5zM497.5 480h13v5h-13zM121.5 484h61v5h-61zM197.5 484h133v5h-133zM357.5 484h97v5h-97zM465.5 484h9v5h-9zM493.5 484h17v5h-17zM121.5 488h57v5h-57zM189.5 488h121v5h-121zM325.5 488h5v5h-5zM353.5 488h105v5h-105zM461.5 488h5v5h-5zM469.5 488h5v5h-5zM489.5 488h21v5h-21zM121.5 492h53v5h-53zM185.5 492h125v5h-125zM325.5 492h9v5h-9zM353.5 492h109v5h-109zM469.5 492h5v5h-5zM497.5 492h17v5h-17zM121.5 496h53v5h-53zM181.5 496h129v5h-129zM353.5 496h113v5h-113zM469.5 496h5v5h-5zM497.5 496h17v5h-17zM121.5 500h53v5h-53zM181.5 500h133v5h-133zM353.5 500h5v5h-5zM365.5 500h101v5h-101zM501.5 500h5v5h-5zM509.5 500h5v5h-5zM121.5 504h49v5h-49zM177.5 504h137v5h-137zM349.5 504h5v5h-5zM357.5 504h109v5h-109zM509.5 504h5v5h-5zM125.5 508h45v5h-45zM177.5 508h137v5h-137zM349.5 508h117v5h-117zM509.5 508h5v5h-5zM125.5 512h41v5h-41zM173.5 512h141v5h-141zM349.5 512h117v5h-117zM509.5 512h5v5h-5zM125.5 516h37v5h-37zM169.5 516h137v5h-137zM349.5 516h117v5h-117zM509.5 516h5v5h-5zM125.5 520h37v5h-37zM173.5 520h133v5h-133zM353.5 520h113v5h-113zM509.5 520h5v5h-5zM125.5 524h37v5h-37zM177.5 524h125v5h-125zM313.5 524h5v5h-5zM353.5 524h113v5h-113zM505.5 524h5v5h-5zM129.5 528h33v5h-33zM181.5 528h13v5h-13zM197.5 528h101v5h-101zM301.5 528h17v5h-17zM357.5 528h105v5h-105zM505.5 528h5v5h-5zM129.5 532h33v5h-33zM181.5 532h5v5h-5zM197.5 532h101v5h-101zM301.5 532h25v5h-25zM361.5 532h101v5h-101zM469.5 532h5v5h-5zM501.5 532h9v5h-9zM129.5 536h37v5h-37zM197.5 536h97v5h-97zM297.5 536h37v5h-37zM365.5 536h97v5h-97zM469.5 536h13v5h-13zM501.5 536h9v5h-9zM129.5 540h37v5h-37zM189.5 540h5v5h-5zM201.5 540h93v5h-93zM297.5 540h37v5h-37zM369.5 540h93v5h-93zM469.5 540h25v5h-25zM505.5 540h5v5h-5zM129.5 544h37v5h-37zM185.5 544h13v5h-13zM201.5 544h133v5h-133zM373.5 544h89v5h-89zM477.5 544h33v5h-33zM129.5 548h37v5h-37zM189.5 548h5v5h-5zM197.5 548h93v5h-93zM293.5 548h45v5h-45zM377.5 548h81v5h-81zM481.5 548h17v5h-17zM501.5 548h9v5h-9zM133.5 552h33v5h-33zM197.5 552h93v5h-93zM293.5 552h45v5h-45zM385.5 552h73v5h-73zM481.5 552h17v5h-17zM501.5 552h9v5h-9zM133.5 556h33v5h-33zM197.5 556h89v5h-89zM289.5 556h49v5h-49zM389.5 556h65v5h-65zM481.5 556h21v5h-21zM505.5 556h5v5h-5zM133.5 560h37v5h-37zM197.5 560h89v5h-89zM289.5 560h53v5h-53zM397.5 560h53v5h-53zM477.5 560h33v5h-33zM133.5 564h37v5h-37zM181.5 564h5v5h-5zM201.5 564h81v5h-81zM289.5 564h53v5h-53zM393.5 564h9v5h-9zM409.5 564h37v5h-37zM477.5 564h33v5h-33zM133.5 568h41v5h-41zM185.5 568h97v5h-97zM285.5 568h61v5h-61zM417.5 568h17v5h-17zM481.5 568h17v5h-17zM137.5 572h37v5h-37zM189.5 572h93v5h-93zM285.5 572h65v5h-65zM489.5 572h9v5h-9zM501.5 572h5v5h-5zM137.5 576h41v5h-41zM193.5 576h85v5h-85zM285.5 576h65v5h-65zM137.5 580h41v5h-41zM209.5 580h13v5h-13zM241.5 580h37v5h-37zM281.5 580h73v5h-73zM389.5 580h5v5h-5zM397.5 580h13v5h-13zM429.5 580h9v5h-9zM453.5 580h5v5h-5zM137.5 584h49v5h-49zM237.5 584h41v5h-41zM281.5 584h73v5h-73zM389.5 584h21v5h-21zM429.5 584h13v5h-13zM137.5 588h61v5h-61zM237.5 588h9v5h-9zM249.5 588h29v5h-29zM281.5 588h73v5h-73zM385.5 588h29v5h-29zM429.5 588h17v5h-17zM137.5 592h57v5h-57zM205.5 592h9v5h-9zM217.5 592h5v5h-5zM237.5 592h41v5h-41zM281.5 592h73v5h-73zM389.5 592h5v5h-5zM421.5 592h9v5h-9zM433.5 592h5v5h-5zM441.5 592h5v5h-5zM137.5 596h57v5h-57zM197.5 596h29v5h-29zM229.5 596h49v5h-49zM281.5 596h73v5h-73zM393.5 596h5v5h-5zM417.5 596h13v5h-13zM441.5 596h5v5h-5zM137.5 600h141v5h-141zM285.5 600h69v5h-69zM369.5 600h5v5h-5zM409.5 600h17v5h-17zM141.5 604h53v5h-53zM197.5 604h81v5h-81zM281.5 604h73v5h-73zM393.5 604h5v5h-5zM445.5 604h5v5h-5zM489.5 604h5v5h-5zM141.5 608h53v5h-53zM197.5 608h81v5h-81zM281.5 608h73v5h-73zM409.5 608h5v5h-5zM417.5 608h5v5h-5zM441.5 608h13v5h-13zM489.5 608h5v5h-5zM145.5 612h49v5h-49zM201.5 612h77v5h-77zM281.5 612h73v5h-73zM413.5 612h41v5h-41zM485.5 612h9v5h-9zM149.5 616h41v5h-41zM197.5 616h5v5h-5zM213.5 616h25v5h-25zM241.5 616h113v5h-113zM413.5 616h45v5h-45zM485.5 616h5v5h-5zM157.5 620h33v5h-33zM197.5 620h9v5h-9zM225.5 620h129v5h-129zM405.5 620h53v5h-53zM485.5 620h5v5h-5zM157.5 624h33v5h-33zM197.5 624h13v5h-13zM225.5 624h129v5h-129zM401.5 624h5v5h-5zM409.5 624h57v5h-57zM485.5 624h5v5h-5zM157.5 628h33v5h-33zM197.5 628h17v5h-17zM225.5 628h125v5h-125zM397.5 628h5v5h-5zM409.5 628h57v5h-57zM469.5 628h9v5h-9zM161.5 632h33v5h-33zM201.5 632h121v5h-121zM329.5 632h17v5h-17zM409.5 632h49v5h-49zM469.5 632h5v5h-5zM161.5 636h125v5h-125zM293.5 636h29v5h-29zM333.5 636h9v5h-9zM409.5 636h45v5h-45zM465.5 636h5v5h-5zM161.5 640h129v5h-129zM293.5 640h25v5h-25zM321.5 640h5v5h-5zM405.5 640h37v5h-37zM445.5 640h9v5h-9zM465.5 640h5v5h-5zM485.5 640h5v5h-5zM161.5 644h125v5h-125zM289.5 644h29v5h-29zM405.5 644h33v5h-33zM465.5 644h5v5h-5zM477.5 644h5v5h-5zM161.5 648h125v5h-125zM293.5 648h25v5h-25zM405.5 648h33v5h-33zM461.5 648h9v5h-9zM477.5 648h9v5h-9zM165.5 652h125v5h-125zM293.5 652h25v5h-25zM401.5 652h37v5h-37zM461.5 652h9v5h-9zM165.5 656h41v5h-41zM213.5 656h69v5h-69zM293.5 656h25v5h-25zM401.5 656h37v5h-37zM461.5 656h17v5h-17zM169.5 660h37v5h-37zM225.5 660h57v5h-57zM289.5 660h5v5h-5zM301.5 660h17v5h-17zM405.5 660h25v5h-25zM433.5 660h5v5h-5zM461.5 660h9v5h-9zM169.5 664h37v5h-37zM237.5 664h57v5h-57zM305.5 664h13v5h-13zM401.5 664h25v5h-25zM433.5 664h5v5h-5zM461.5 664h13v5h-13zM173.5 668h33v5h-33zM237.5 668h37v5h-37zM285.5 668h9v5h-9zM301.5 668h17v5h-17zM409.5 668h9v5h-9zM433.5 668h5v5h-5zM465.5 668h5v5h-5zM177.5 672h33v5h-33zM241.5 672h29v5h-29zM293.5 672h9v5h-9zM309.5 672h9v5h-9zM325.5 672h5v5h-5zM429.5 672h9v5h-9zM181.5 676h29v5h-29zM241.5 676h29v5h-29zM281.5 676h5v5h-5zM293.5 676h9v5h-9zM309.5 676h9v5h-9zM325.5 676h5v5h-5zM429.5 676h9v5h-9zM185.5 680h25v5h-25zM241.5 680h29v5h-29zM281.5 680h9v5h-9zM293.5 680h9v5h-9zM317.5 680h13v5h-13zM429.5 680h9v5h-9zM185.5 684h29v5h-29zM241.5 684h29v5h-29zM277.5 684h13v5h-13zM297.5 684h5v5h-5zM317.5 684h13v5h-13zM401.5 684h5v5h-5zM425.5 684h13v5h-13zM185.5 688h29v5h-29zM241.5 688h29v5h-29zM285.5 688h5v5h-5zM297.5 688h5v5h-5zM317.5 688h13v5h-13zM361.5 688h9v5h-9zM401.5 688h5v5h-5zM425.5 688h9v5h-9zM185.5 692h33v5h-33zM237.5 692h33v5h-33zM281.5 692h9v5h-9zM297.5 692h5v5h-5zM421.5 692h13v5h-13zM185.5 696h33v5h-33zM241.5 696h29v5h-29zM281.5 696h9v5h-9zM301.5 696h5v5h-5zM381.5 696h5v5h-5zM421.5 696h13v5h-13zM189.5 700h33v5h-33zM241.5 700h49v5h-49zM305.5 700h5v5h-5zM333.5 700h9v5h-9zM377.5 700h13v5h-13zM417.5 700h17v5h-17zM189.5 704h33v5h-33zM241.5 704h53v5h-53zM301.5 704h17v5h-17zM325.5 704h17v5h-17zM345.5 704h33v5h-33zM385.5 704h9v5h-9zM417.5 704h17v5h-17zM189.5 708h37v5h-37zM241.5 708h29v5h-29zM277.5 708h17v5h-17zM297.5 708h13v5h-13zM317.5 708h5v5h-5zM333.5 708h5v5h-5zM345.5 708h13v5h-13zM361.5 708h21v5h-21zM413.5 708h17v5h-17zM189.5 712h37v5h-37zM241.5 712h29v5h-29zM281.5 712h9v5h-9zM333.5 712h5v5h-5zM349.5 712h9v5h-9zM365.5 712h13v5h-13zM409.5 712h21v5h-21zM189.5 716h41v5h-41zM241.5 716h29v5h-29zM281.5 716h9v5h-9zM305.5 716h5v5h-5zM349.5 716h9v5h-9zM369.5 716h9v5h-9zM409.5 716h9v5h-9zM189.5 720h45v5h-45zM241.5 720h29v5h-29zM281.5 720h9v5h-9zM301.5 720h9v5h-9zM329.5 720h5v5h-5zM349.5 720h9v5h-9zM369.5 720h9v5h-9zM189.5 724h81v5h-81zM281.5 724h9v5h-9zM301.5 724h9v5h-9zM329.5 724h5v5h-5zM349.5 724h9v5h-9zM189.5 728h81v5h-81zM281.5 728h9v5h-9zM301.5 728h13v5h-13zM325.5 728h9v5h-9zM189.5 732h81v5h-81zM281.5 732h9v5h-9zM301.5 732h5v5h-5zM309.5 732h5v5h-5zM325.5 732h5v5h-5zM405.5 732h9v5h-9zM189.5 736h81v5h-81zM281.5 736h9v5h-9zM301.5 736h5v5h-5zM325.5 736h5v5h-5zM369.5 736h9v5h-9zM405.5 736h13v5h-13zM189.5 740h105v5h-105zM301.5 740h9v5h-9zM325.5 740h5v5h-5zM349.5 740h9v5h-9zM373.5 740h5v5h-5zM405.5 740h5v5h-5zM189.5 744h101v5h-101zM293.5 744h29v5h-29zM325.5 744h9v5h-9zM357.5 744h5v5h-5zM373.5 744h5v5h-5zM401.5 744h5v5h-5zM189.5 748h97v5h-97zM297.5 748h9v5h-9zM309.5 748h9v5h-9zM325.5 748h9v5h-9zM341.5 748h9v5h-9zM357.5 748h5v5h-5zM373.5 748h5v5h-5zM397.5 748h9v5h-9zM189.5 752h97v5h-97zM301.5 752h5v5h-5zM313.5 752h5v5h-5zM325.5 752h9v5h-9zM341.5 752h9v5h-9zM357.5 752h5v5h-5zM373.5 752h5v5h-5zM389.5 752h5v5h-5zM397.5 752h5v5h-5zM189.5 756h97v5h-97zM293.5 756h5v5h-5zM301.5 756h5v5h-5zM325.5 756h9v5h-9zM341.5 756h9v5h-9zM357.5 756h9v5h-9zM373.5 756h9v5h-9zM389.5 756h5v5h-5zM189.5 760h81v5h-81zM273.5 760h13v5h-13zM293.5 760h5v5h-5zM301.5 760h5v5h-5zM309.5 760h5v5h-5zM317.5 760h5v5h-5zM325.5 760h13v5h-13zM341.5 760h13v5h-13zM357.5 760h9v5h-9zM373.5 760h25v5h-25zM189.5 764h165v5h-165zM357.5 764h13v5h-13zM373.5 764h17v5h-17zM189.5 768h133v5h-133zM349.5 768h5v5h-5zM361.5 768h17v5h-17zM385.5 768h5v5h-5zM189.5 772h105v5h-105zM297.5 772h9v5h-9zM313.5 772h5v5h-5zM385.5 772h5v5h-5zM433.5 772h5v5h-5zM193.5 776h97v5h-97zM297.5 776h9v5h-9zM325.5 776h9v5h-9zM437.5 776h5v5h-5zM197.5 780h93v5h-93zM297.5 780h9v5h-9zM313.5 780h5v5h-5zM325.5 780h9v5h-9zM345.5 780h5v5h-5zM353.5 780h5v5h-5zM437.5 780h5v5h-5zM197.5 784h93v5h-93zM297.5 784h17v5h-17zM325.5 784h9v5h-9zM341.5 784h17v5h-17zM437.5 784h5v5h-5zM201.5 788h89v5h-89zM301.5 788h9v5h-9zM437.5 788h5v5h-5zM201.5 792h93v5h-93zM205.5 796h89v5h-89zM209.5 800h77v5h-77zM209.5 804h77v5h-77zM213.5 808h73v5h-73zM217.5 812h69v5h-69zM313.5 812h5v5h-5zM217.5 816h65v5h-65zM293.5 816h5v5h-5zM313.5 816h5v5h-5zM225.5 820h57v5h-57zM225.5 824h57v5h-57zM229.5 828h49v5h-49zM233.5 832h45v5h-45zM285.5 832h9v5h-9zM301.5 832h9v5h-9zM237.5 836h45v5h-45zM289.5 836h5v5h-5zM301.5 836h9v5h-9zM241.5 840h45v5h-45zM293.5 840h9v5h-9zM305.5 840h9v5h-9zM317.5 840h5v5h-5zM249.5 844h45v5h-45zM309.5 844h5v5h-5zM321.5 844h9v5h-9zM257.5 848h53v5h-53zM317.5 848h5v5h-5zM261.5 852h49v5h-49zM313.5 852h9v5h-9zM265.5 856h37v5h-37zM273.5 860h41v5h-41zM333.5 860h25v5h-25zM281.5 864h53v5h-53z" fill="#000"/>
<circle cx="570.800" cy="888.300" r="3.700" fill="#2a5bd0"/>
</svg>
<div class="t" style="left:94.4px;top:903.7px;font-size:13px;line-height:15.6px;color:#3f66c6;transform:scaleX(1.0112);transform-origin:0 50%;-webkit-text-stroke:0.3px #3f66c6;">Add</div>
<div class="a" style="left:145.500px;top:898px;width:53px;height:27.500px;border:1px solid #7d7f82;border-radius:4px;background:#fbfbfa"></div>
<div class="t" style="left:156.5px;top:903.7px;font-size:13px;line-height:15.6px;color:#333;">1000</div>
<div class="t" style="left:205.5px;top:905.82px;font-size:12.8px;line-height:15.36px;color:#4a4a4a;transform:scaleX(1.0146);transform-origin:0 50%;">more rows at the bottom</div>
<div class="a" style="left:1040px;top:239px;width:11px;height:21px;background:#f4f4f4;border-left:1px solid #e6e6e6"></div>
<div class="a" style="left:1040px;top:259px;width:11px;height:752px;background:#fefefe;border-left:1px solid #e2e2e2;border-top:1px solid #e2e2e2"></div>
<div class="a" style="left:1040.5px;top:982px;width:10.500px;height:28.500px;background:#f5f5f5;border-top:1px solid #e0e0e0;border-left:1px solid #e0e0e0"></div>
<div class="a" style="left:1040.5px;top:996px;width:10.500px;height:1px;background:#e0e0e0"></div>
<svg class="ic" style="left:1043px;top:987.7px;width:5.400px;height:3px" viewBox="0 0 6 3"><path d="M0 3L3 0 6 3z" fill="#8c8c8c"/></svg>
<svg class="ic" style="left:1043px;top:1001.800px;width:5.400px;height:3px" viewBox="0 0 6 3"><path d="M0 0L3 3 6 0z" fill="#8c8c8c"/></svg>
<div class="a" style="left:29px;top:1010px;width:1022px;height:11.300px;background:#fefefe;border-top:1px solid #dedede;border-bottom:1px solid #dedede"></div>
<div class="a" style="left:69.500px;top:1010px;width:1px;height:11px;background:#e0e0e0"></div>
<div class="a" style="left:1011.5px;top:1011px;width:39.500px;height:9.500px;background:#f4f4f4;border-left:1px solid #e0e0e0"></div>
<div class="a" style="left:1025.500px;top:1011px;width:1px;height:9.500px;background:#e0e0e0"></div>
<div class="a" style="left:1040px;top:1011px;width:1px;height:9.500px;background:#e0e0e0"></div>
<svg class="ic" style="left:1016.800px;top:1013.300px;width:3px;height:5.400px" viewBox="0 0 3 6"><path d="M3 0L0 3 3 6z" fill="#8a8a8a"/></svg>
<svg class="ic" style="left:1031.800px;top:1013.300px;width:3px;height:5.400px" viewBox="0 0 3 6"><path d="M0 0L3 3 0 6z" fill="#8a8a8a"/></svg>
<div class="a" style="left:29px;top:1021.5px;width:1022px;height:33.500px;background:#f9fbfd"></div>
<svg class="ic" style="left:76.5px;top:1031px;width:16px;height:16px" viewBox="0 0 24 24"><path fill="#444746" d="M19 13h-6v6h-2v-6H5v-2h6V5h2v6h6v2z"/></svg>
<svg class="ic" style="left:113px;top:1031px;width:16px;height:16px" viewBox="0 0 24 24"><path fill="#444746" d="M3 18h18v-2H3v2zm0-5h18v-2H3v2zm0-7v2h18V6H3z"/></svg>
<div class="a" style="left:150px;top:1021.5px;width:158px;height:33.500px;background:#e3e9f6"></div>
<div class="t" style="left:161px;top:1031.66px;font-size:13.4px;line-height:16.08px;color:#4267c3;transform:scaleX(1.0195);transform-origin:0 50%;font-weight:bold">Genuary2025_Day</div>
<svg class="ic" style="left:286.5px;top:1031.5px;width:16px;height:16px" viewBox="0 0 24 24"><path fill="#4267c3" d="M7 10l5 5 5-5z"/></svg>
<svg class="ic" style="left:1015.6px;top:1032px;width:18px;height:18px" viewBox="0 0 24 24"><path fill="#444746" d="M15.41 7.41L14 6l-6 6 6 6 1.41-1.41L10.83 12z"/></svg>
</body></html>
